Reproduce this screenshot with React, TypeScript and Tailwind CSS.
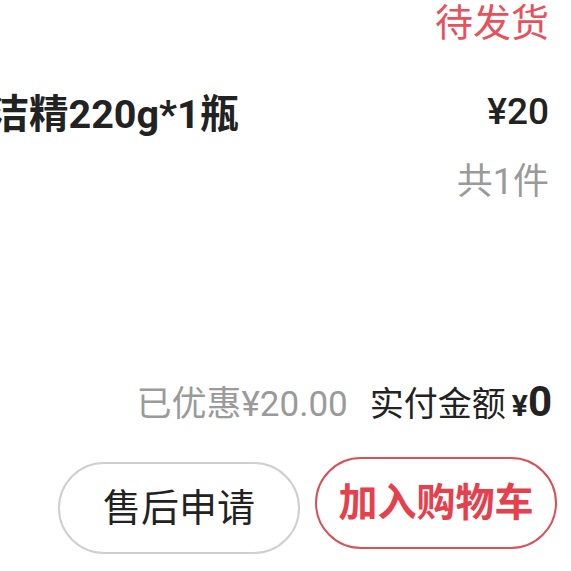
export default function App() {
  return (
    <div className="relative h-[571px] w-[571px] overflow-hidden bg-white font-['Roboto','Noto_Sans_CJK_SC',sans-serif] text-[#222]">
      {/* status */}
      <div className="flex justify-end pr-[22px] pt-[2px] text-[38px] leading-[42px] text-[#e8505b]">
        待发货
      </div>

      {/* product row */}
      <div className="mt-[49px] flex items-center justify-between pr-[22px]">
        <div className="ml-[-50px] whitespace-nowrap text-[39.5px] font-bold leading-[44px]">
          洗洁精220g*1瓶
        </div>
        <div className="mt-[-6px] text-[37px] font-medium leading-[44px]">¥20</div>
      </div>
      <div className="mt-[25px] flex justify-end pr-[22px] text-[36px] leading-[40px] text-[#9a9a9a]">
        共1件
      </div>

      {/* totals */}
      <div className="mt-[180px] flex items-baseline justify-end pr-[19px] leading-[40px]">
        <span className="text-[35px] text-[#9a9a9a]">已优惠¥20.00</span>
        <span className="ml-[22px] text-[34px]">实付金额</span>
        <span className="ml-[6px] text-[30px] font-bold">¥</span>
        <span className="text-[42px] font-bold">0</span>
      </div>

      {/* actions */}
      <div className="mt-[31px] flex items-start justify-end gap-[15px] pr-[14px]">
        <button className="mt-[5px] flex h-[92px] w-[242px] items-center justify-center rounded-full border-2 border-[#cfcfcf] text-[38px] text-[#222]">
          售后申请
        </button>
        <button className="flex h-[92px] w-[242px] items-center justify-center rounded-full border-2 border-[#d9505a] text-[39px] font-bold text-[#e5404c]">
          加入购物车
        </button>
      </div>
    </div>
  );
}
